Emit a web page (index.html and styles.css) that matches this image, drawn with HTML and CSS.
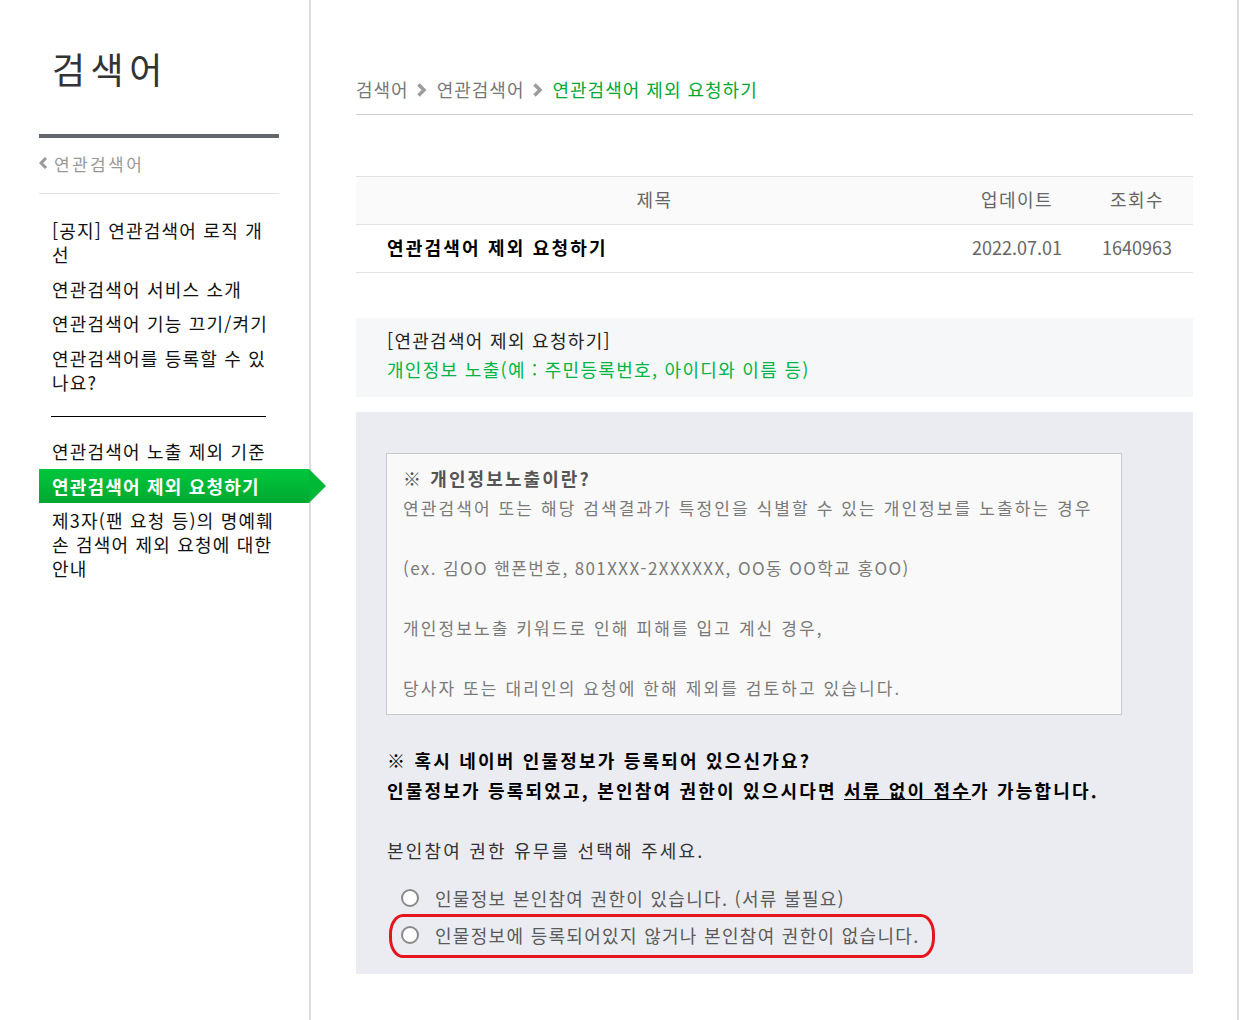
FILE: index.html
```html
<!DOCTYPE html>
<html lang="ko">
<head>
  <meta charset="utf-8">
  <title>연관검색어 제외 요청하기</title>
  <link rel="stylesheet" href="styles.css">
</head>
<body>
  <div class="page">
    <div class="sidebar">
      <h1 class="side-title">검색어</h1>
      <div class="side-back">
        <svg width="9" height="12" viewBox="0 0 9 12"><polyline points="7,1 2,6 7,11" fill="none" stroke="#9a9a9a" stroke-width="3"/></svg>
        <span>연관검색어</span>
      </div>
      <ul class="side-menu">
        <li>[공지] 연관검색어 로직 개선</li>
        <li>연관검색어 서비스 소개</li>
        <li>연관검색어 기능 끄기/켜기</li>
        <li>연관검색어를 등록할 수 있나요?</li>
        <li class="divider"></li>
        <li>연관검색어 노출 제외 기준</li>
        <li class="active">연관검색어 제외 요청하기</li>
        <li>제3자(팬 요청 등)의 명예훼손 검색어 제외 요청에 대한 안내</li>
      </ul>
    </div>

    <div class="main">
      <div class="crumbs">
        <span>검색어</span>
        <svg class="crumb-arrow" width="11" height="16" viewBox="0 0 11 16"><polyline points="2.5,2.5 8,8 2.5,13.5" fill="none" stroke="#9c9c9c" stroke-width="3.5"/></svg>
        <span>연관검색어</span>
        <svg class="crumb-arrow" width="11" height="16" viewBox="0 0 11 16"><polyline points="2.5,2.5 8,8 2.5,13.5" fill="none" stroke="#9c9c9c" stroke-width="3.5"/></svg>
        <span class="current">연관검색어 제외 요청하기</span>
      </div>

      <table class="board">
        <colgroup>
          <col class="col-title">
          <col class="col-date">
          <col class="col-hit">
        </colgroup>
        <thead>
          <tr>
            <th>제목</th>
            <th>업데이트</th>
            <th>조회수</th>
          </tr>
        </thead>
        <tbody>
          <tr>
            <td class="subject">연관검색어 제외 요청하기</td>
            <td class="num">2022.07.01</td>
            <td class="num">1640963</td>
          </tr>
        </tbody>
      </table>

      <div class="summary">
        <p>[연관검색어 제외 요청하기]</p>
        <p class="green">개인정보 노출(예 : 주민등록번호, 아이디와 이름 등)</p>
      </div>

      <div class="form-area">
        <div class="notice">
          <p class="notice-head">※ 개인정보노출이란?</p>
          <p>연관검색어 또는 해당 검색결과가 특정인을 식별할 수 있는 개인정보를 노출하는 경우</p>
          <p>&nbsp;</p>
          <p class="ex">(ex. 김OO 핸폰번호, 801XXX-2XXXXXX, OO동 OO학교 홍OO)</p>
          <p>&nbsp;</p>
          <p>개인정보노출 키워드로 인해 피해를 입고 계신 경우,</p>
          <p>&nbsp;</p>
          <p>당사자 또는 대리인의 요청에 한해 제외를 검토하고 있습니다.</p>
        </div>

        <div class="question">
          <p class="strong">※ 혹시 네이버 인물정보가 등록되어 있으신가요?</p>
          <p class="strong">인물정보가 등록되었고, 본인참여 권한이 있으시다면 <u>서류 없이 접수</u>가 가능합니다.</p>
          <p>&nbsp;</p>
          <p>본인참여 권한 유무를 선택해 주세요.</p>
        </div>

        <div class="choices">
          <label class="choice"><span class="radio"></span>인물정보 본인참여 권한이 있습니다. (서류 불필요)</label>
          <label class="choice"><span class="radio"></span>인물정보에 등록되어있지 않거나 본인참여 권한이 없습니다.</label>
          <div class="mark"></div>
        </div>
      </div>
    </div>
  </div>
</body>
</html>
```

FILE: styles.css
```css
body {
  margin: 0;
  font-family: "Noto Sans CJK KR", "Liberation Sans", sans-serif;
  color: #000;
  background: #fff;
}

p {
  margin: 0;
}

.page {
  display: flex;
  min-height: 1020px;
  width: 1241px;
}

/* left menu */
.sidebar {
  width: 311px;
  flex-shrink: 0;
  border-right: 2px solid #dcdcdc;
  padding-left: 39px;
  box-sizing: border-box;
}

.side-title {
  margin: 45px 0 0 13px;
  font-size: 36px;
  font-weight: normal;
  line-height: 46px;
  letter-spacing: 5.5px;
  color: #333;
}

.side-back {
  width: 240px;
  margin-top: 43px;
  border-top: 4px solid #63666b;
  border-bottom: 1px solid #e3e3e3;
  padding-bottom: 5px;
  height: 50px;
  display: flex;
  align-items: center;
  gap: 6px;
  font-size: 17px;
  letter-spacing: 2.4px;
  color: #999;
}

.side-menu {
  list-style: none;
  margin: 19px 0 0;
  padding: 0;
}

.side-menu li {
  padding: 5px 32px 5.5px 13px;
  font-size: 18px;
  line-height: 24px;
  letter-spacing: 1.2px;
  color: #111;
}

.side-menu .divider {
  height: 1px;
  padding: 0;
  margin: 17px 43px 17px 12px;
  background: #000;
}

.side-menu .active {
  position: relative;
  background: linear-gradient(#00c73c, #00a830);
  color: #fff;
  font-weight: bold;
}

.side-menu .active::after {
  content: "";
  position: absolute;
  right: -17px;
  top: 0;
  border-left: 17px solid #00b836;
  border-top: 17.25px solid transparent;
  border-bottom: 17.25px solid transparent;
}

/* main column */
.main {
  width: 928px;
  border-right: 2px solid #dcdcdc;
  padding: 0 44px 0 45px;
  box-sizing: border-box;
}

.crumbs {
  height: 115px;
  border-bottom: 1px solid #cfcfcf;
  display: flex;
  align-items: flex-start;
  gap: 7px;
  padding-top: 77px;
  box-sizing: border-box;
  font-size: 18px;
  line-height: 24px;
  letter-spacing: 1px;
  color: #777;
}

.crumb-arrow {
  margin: 5px 3px 0 0;
}

.crumbs .current {
  color: #00a832;
}

.board {
  width: 100%;
  margin-top: 61px;
  border-collapse: collapse;
  table-layout: fixed;
  font-size: 18px;
  letter-spacing: 1.5px;
}

.board .col-title {
  width: 597px;
}

.board .col-date {
  width: 128px;
}

.board th,
.board td {
  height: 44px;
  padding: 0 0 3px;
  border-top: 1px solid #e2e2e2;
  border-bottom: 1px solid #e2e2e2;
  font-weight: normal;
  text-align: center;
  color: #666;
}

.board th {
  background: #fafafa;
}

.board .num {
  letter-spacing: 0;
}

.board .subject {
  text-align: left;
  padding-left: 31px;
  font-weight: bold;
  letter-spacing: 2.2px;
  color: #000;
}

.summary {
  margin-top: 45px;
  background: #f6f7f9;
  padding: 8px 31px 13px;
  font-size: 18px;
  line-height: 29px;
  letter-spacing: 1.3px;
  color: #222;
}

.summary .green {
  color: #00b443;
}

.form-area {
  margin-top: 15px;
  background: #ebecf1;
  padding: 41px 30px 21px;
}

.notice {
  width: 736px;
  box-sizing: border-box;
  background: #f9f9f9;
  border: 1px solid #cacaca;
  padding: 9px 16px 11px;
  font-size: 17px;
  line-height: 30px;
  letter-spacing: 2.1px;
  color: #7a7a7a;
}

.notice .ex {
  letter-spacing: 1.4px;
}

.notice .notice-head {
  color: #555;
  font-size: 18px;
  font-weight: bold;
}

.question {
  margin-top: 30px;
  padding-left: 1px;
  font-size: 18px;
  line-height: 30px;
  letter-spacing: 2.2px;
  color: #333;
}

.question .strong {
  color: #000;
  font-weight: bold;
}

.choices {
  position: relative;
  margin-top: 14px;
  padding-left: 15px;
}

.choice {
  display: flex;
  align-items: center;
  height: 37px;
  font-size: 18px;
  letter-spacing: 1.3px;
  color: #5a5a5a;
}

.radio {
  width: 14px;
  height: 14px;
  border: 2px solid #8a8a8a;
  border-radius: 50%;
  background: #fff;
  margin-right: 16px;
}

.mark {
  position: absolute;
  left: 3px;
  top: 35px;
  width: 540px;
  height: 38px;
  border: 3px solid #e8141c;
  border-radius: 14px / 20px;
}
```
